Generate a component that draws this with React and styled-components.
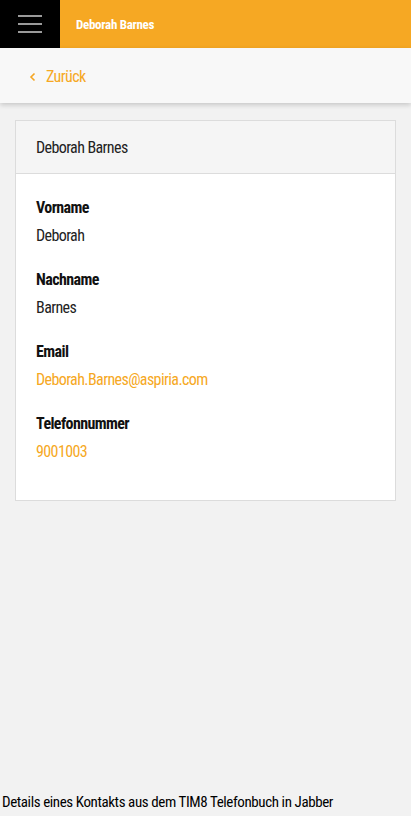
import React from 'react';
import styled, { createGlobalStyle } from 'styled-components';

const GlobalStyle = createGlobalStyle`
    html, body {
        margin: 0;
        padding: 0;
        background: #f2f2f2;
    }
    body {
        font-family: "Roboto Condensed", "Liberation Sans Narrow", "DejaVu Sans Condensed", "Roboto", sans-serif;
        letter-spacing: -0.6px;
    }
`

const fields = [
    { label: 'Vorname', value: 'Deborah' },
    { label: 'Nachname', value: 'Barnes' },
    { label: 'Email', value: 'Deborah.Barnes@aspiria.com', link: true },
    { label: 'Telefonnummer', value: '9001003', link: true },
];

function App() {
  return (
      <Page>
          <GlobalStyle />
          <TopBar>
              <MenuButton>
                  <span></span>
                  <span></span>
                  <span></span>
              </MenuButton>
              <Title>Deborah Barnes</Title>
          </TopBar>
          <SubBar>
              <BackLink>
                  <svg width="8" height="10" viewBox="0 0 8 10">
                      <path d="M5.5 1.5 L2 5 L5.5 8.5" fill="none" stroke="#f5a623" strokeWidth="1.6" />
                  </svg>
                  <span>Zurück</span>
              </BackLink>
          </SubBar>
          <Content>
              <Card>
                  <CardHeader>Deborah Barnes</CardHeader>
                  <CardBody>
                      {fields.map((f) => (
                          <Field key={f.label}>
                              <Label>{f.label}</Label>
                              <Value $link={f.link}>{f.value}</Value>
                          </Field>
                      ))}
                  </CardBody>
              </Card>
          </Content>
          <Caption>Details eines Kontakts aus dem TIM8 Telefonbuch in Jabber</Caption>
      </Page>
  )
}

const Page = styled.div`
    min-height: 816px;
    display: flex;
    flex-direction: column;
`
const TopBar = styled.div`
    height: 48px;
    display: flex;
    align-items: center;
    background: #f6a823;
`
const MenuButton = styled.div`
    width: 60px;
    height: 48px;
    background: #000;
    display: flex;
    flex-direction: column;
    justify-content: center;
    align-items: center;
    gap: 6px;

    span {
        display: block;
        width: 24px;
        height: 2px;
        background: #9a9a9a;
    }
`
const Title = styled.div`
    margin-left: 16px;
    color: #fff;
    font-weight: 700;
    font-size: 13px;
    letter-spacing: -0.3px;
`
const SubBar = styled.div`
    height: 55px;
    background: #f8f8f8;
    box-shadow: 0 2px 5px rgba(0, 0, 0, 0.18);
    display: flex;
    align-items: center;
    padding-left: 29px;
    position: relative;
`
const BackLink = styled.div`
    display: flex;
    align-items: center;
    gap: 9px;
    color: #f6a823;
    font-size: 16px;
    padding-top: 2px;
`
const Content = styled.div`
    padding: 17px 15px 0;
`
const Card = styled.div`
    border: 1px solid #dcdcdc;
    background: #fff;
`
const CardHeader = styled.div`
    height: 52px;
    display: flex;
    align-items: center;
    padding-left: 20px;
    background: #f5f5f5;
    border-bottom: 1px solid #dcdcdc;
    color: #222;
    font-size: 16px;
`
const CardBody = styled.div`
    padding: 24px 20px 38px;
    display: flex;
    flex-direction: column;
    gap: 24px;
`
const Field = styled.div`
    display: flex;
    flex-direction: column;
    gap: 8px;
`
const Label = styled.div`
    font-weight: 700;
    font-size: 16px;
    color: #111;
    line-height: 20px;
`
const Value = styled.div`
    font-size: 16px;
    line-height: 20px;
    color: ${(p) => (p.$link ? '#f6a823' : '#222')};
`
const Caption = styled.div`
    margin-top: auto;
    padding: 0 0 4px 2px;
    font-size: 15px;
    letter-spacing: -0.4px;
    color: #000;
    line-height: 20px;
`

export default App
